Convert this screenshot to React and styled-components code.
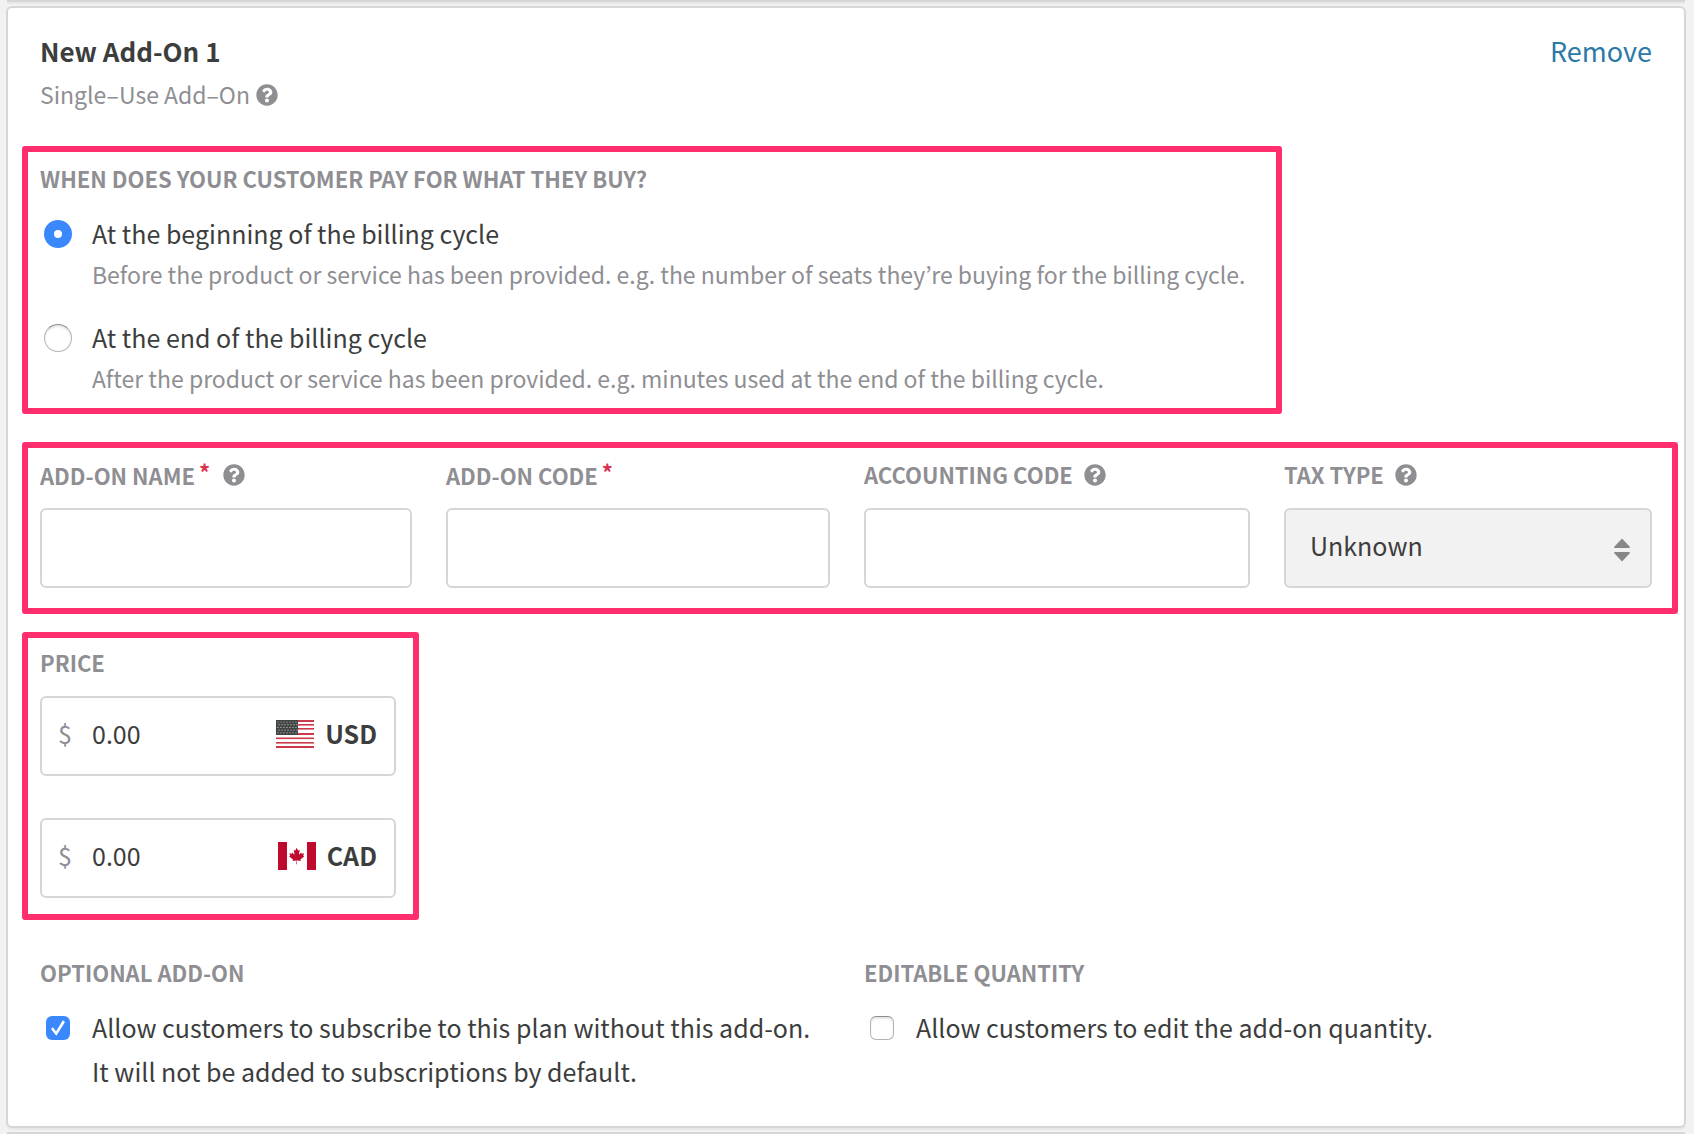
import React, { useState } from "react"
import styled, { createGlobalStyle } from "styled-components"
import { FaQuestionCircle } from "react-icons/fa"

const colors = {
  page: "#f2f2f2",
  border: "#d6d6d6",
  shadow: "#e8e8e8",
  text: "#3c3d3d",
  muted: "#8e8e93",
  link: "#2a79a8",
  accent: "#3b88fd",
  highlight: "#ff2f6e",
  required: "#dc3150",
}

const UsaFlag = () => (
  <Flag viewBox="0 0 38 28" aria-hidden="true">
    <rect width="38" height="28" fill="#fff" />
    {[0, 4, 8, 13, 17.5, 22, 26].map((y, i) => (
      <rect
        key={y}
        y={y}
        width="38"
        height={i === 3 || i === 0 || i === 6 ? 2 : 1.6}
        fill="#cb3a49"
      />
    ))}
    <rect width="22" height="15" fill="#414444" />
    {[2, 4.7, 7.4, 10.1, 12.8].map((y, row) =>
      [2, 5, 8, 11, 14, 17, 20].map(x => (
        <circle
          key={`${x}-${y}`}
          cx={row % 2 ? x + 1 : x}
          cy={y}
          r="0.6"
          fill="#c4c7c4"
        />
      ))
    )}
  </Flag>
)

const CanadaFlag = () => (
  <Flag viewBox="0 0 38 28" aria-hidden="true">
    <rect width="38" height="28" fill="#fff" />
    <rect width="9" height="28" fill="#bf0a30" />
    <rect x="29" width="9" height="28" fill="#bf0a30" />
    <path
      transform="translate(18.7 14) scale(0.0041)"
      fill="#bf0a30"
      d="m-90 2030 45-863a95 95 0 0 0-111-98l-859 151 116-320a65 65 0 0 0-20-73l-941-762 212-99a65 65 0 0 0 34-79l-186-572 542 115a65 65 0 0 0 73-38l105-247 423 454a65 65 0 0 0 111-57l-204-1052 327 189a65 65 0 0 0 91-27l332-652 332 652a65 65 0 0 0 91 27l327-189-204 1052a65 65 0 0 0 111 57l423-454 105 247a65 65 0 0 0 73 38l542-115-186 572a65 65 0 0 0 34 79l212 99-941 762a65 65 0 0 0-20 73l116 320-859-151a95 95 0 0 0-111 98l45 863z"
    />
  </Flag>
)

const timings = [
  {
    value: "beginning",
    title: "At the beginning of the billing cycle",
    text:
      "Before the product or service has been provided. e.g. the number of seats they’re buying for the billing cycle.",
  },
  {
    value: "end",
    title: "At the end of the billing cycle",
    text:
      "After the product or service has been provided. e.g. minutes used at the end of the billing cycle.",
  },
]

const currencies = [
  { code: "USD", flag: <UsaFlag /> },
  { code: "CAD", flag: <CanadaFlag /> },
]

const App = () => {
  const [timing, setTiming] = useState("beginning")

  return (
    <>
      <GlobalStyle />
      <Page>
        <CardEdge $side="bottom" />
        <Card>
          <Header>
            <div>
              <Title>New Add-On 1</Title>
              <Subtitle>
                Single–Use Add–On
                <HelpIcon />
              </Subtitle>
            </div>
            <RemoveLink href="#remove">Remove</RemoveLink>
          </Header>

          <TimingBox>
            <Legend>When does your customer pay for what they buy?</Legend>
            {timings.map(item => (
              <Option key={item.value}>
                <Radio
                  name="timing"
                  value={item.value}
                  checked={timing === item.value}
                  onChange={() => setTiming(item.value)}
                />
                <span>
                  <OptionTitle>{item.title}</OptionTitle>
                  <OptionText>{item.text}</OptionText>
                </span>
              </Option>
            ))}
          </TimingBox>

          <DetailsBox>
            <div>
              <LabelRow>
                <Label htmlFor="name">
                  Add-on name<Required>*</Required>
                </Label>
                <HelpIcon />
              </LabelRow>
              <Input id="name" />
            </div>
            <div>
              <LabelRow>
                <Label htmlFor="code">
                  Add-on code<Required>*</Required>
                </Label>
              </LabelRow>
              <Input id="code" />
            </div>
            <div>
              <LabelRow>
                <Label htmlFor="accounting">Accounting code</Label>
                <HelpIcon />
              </LabelRow>
              <Input id="accounting" />
            </div>
            <div>
              <LabelRow>
                <Label htmlFor="tax">Tax type</Label>
                <HelpIcon />
              </LabelRow>
              <SelectWrapper>
                <Select id="tax" defaultValue="Unknown">
                  <option>Unknown</option>
                  <option>Physical</option>
                  <option>Digital</option>
                </Select>
                <Arrows viewBox="0 0 16 24" aria-hidden="true">
                  <path d="M8 0.5 15.5 8.5Q16.5 10 15 10H1Q-.5 10 .5 8.5Z" />
                  <path d="M8 23.5 15.5 15.5Q16.5 14 15 14H1Q-.5 14 .5 15.5Z" />
                </Arrows>
              </SelectWrapper>
            </div>
          </DetailsBox>

          <PriceBox>
            <Legend>Price</Legend>
            <PriceList>
              {currencies.map(({ code, flag }) => (
                <PriceField key={code}>
                  <Dollar>$</Dollar>
                  <PriceInput defaultValue="0.00" aria-label={code} />
                  {flag}
                  <Currency>{code}</Currency>
                </PriceField>
              ))}
            </PriceList>
          </PriceBox>

          <Settings>
            <Group>
              <Legend>Optional add-on</Legend>
              <Option>
                <Checkbox defaultChecked />
                <OptionTitle>
                  Allow customers to subscribe to this plan without this add-on.
                  <br />
                  It will not be added to subscriptions by default.
                </OptionTitle>
              </Option>
            </Group>
            <Group>
              <Legend>Editable quantity</Legend>
              <Option>
                <Checkbox />
                <OptionTitle>
                  Allow customers to edit the add-on quantity.
                </OptionTitle>
              </Option>
            </Group>
          </Settings>
        </Card>
        <CardEdge $side="top" />
      </Page>
    </>
  )
}

export default App

const GlobalStyle = createGlobalStyle`
  * {
    box-sizing: border-box;
  }

  body {
    margin: 0;
    background: ${colors.page};
    color: ${colors.text};
    font-family: "Noto Sans CJK KR", "Noto Sans", sans-serif;
    font-size: 25px;
    line-height: 44px;
  }

  input,
  select {
    color: inherit;
    font: inherit;
  }
`

const Page = styled.main`
  display: grid;
  gap: 4px;
  padding: 0 8px 0 6px;
`

const Card = styled.section`
  padding: 23px 6px 33px 14px;
  background: #fff;
  border: 2px solid ${colors.border};
  border-radius: 6px;
  box-shadow: 0 2px 0 ${colors.shadow};
`

/* visible edge of the neighbouring card */
const CardEdge = styled.div`
  height: 2px;
  margin: 0 1px;
  background: ${colors.border};
  box-shadow: 0 ${props => (props.$side === "bottom" ? "2px" : "0")} 0
    ${colors.shadow};
`

const Header = styled.header`
  display: flex;
  justify-content: space-between;
  padding: 0 26px 32px 18px;
`

const Title = styled.h1`
  margin: 0;
  font-size: 26px;
  font-weight: 600;
  line-height: 40px;
`

const Subtitle = styled.p`
  display: flex;
  align-items: center;
  gap: 6px;
  margin: 0;
  padding-top: 3px;
  color: ${colors.muted};
  font-size: 23px;
  line-height: 40px;
`

const RemoveLink = styled.a`
  color: ${colors.link};
  font-size: 27px;
  line-height: 40px;
  text-decoration: none;
`

const HelpIcon = styled(FaQuestionCircle)`
  width: 22px;
  height: 22px;
  margin-top: 2px;
  color: ${colors.muted};
`

const Highlight = styled.fieldset`
  min-width: 0;
  margin: 0;
  border: 6px solid ${colors.highlight};
  border-radius: 3px;
`

const Legend = styled.legend`
  float: left;
  width: 100%;
  padding: 0;
  color: ${colors.muted};
  font-size: 22px;
  font-weight: 600;
  line-height: 28px;
  text-transform: uppercase;
`

const TimingBox = styled(Highlight)`
  width: fit-content;
  padding: 12px 30px 8px 12px;
`

const Option = styled.label`
  display: grid;
  grid-template-columns: 52px auto;
  clear: both;
  padding-top: 19px;
`

const OptionTitle = styled.span`
  display: block;
  line-height: 44px;
`

const OptionText = styled.span`
  display: block;
  padding-bottom: 3px;
  color: ${colors.muted};
  font-size: 23px;
  line-height: 38px;
`

const Radio = styled.input.attrs({ type: "radio" })`
  appearance: none;
  width: 28px;
  height: 28px;
  margin: 9px 4px;
  background: #fff;
  border: 1px solid #b4b4b4;
  border-top-color: #8f8f8f;
  border-radius: 50%;
  box-shadow: inset 0 2px 2px #e6e6e6;

  &:checked {
    border: 10px solid ${colors.accent};
    box-shadow: none;
  }
`

const Checkbox = styled.input.attrs({ type: "checkbox" })`
  appearance: none;
  width: 24px;
  height: 24px;
  margin: 11px 6px;
  background: #fff;
  border: 1px solid #b4b4b4;
  border-top-color: #8f8f8f;
  border-radius: 6px;
  box-shadow: inset 0 2px 2px #e6e6e6;

  &:checked {
    display: grid;
    place-items: center;
    background: ${colors.accent};
    border: 0;
    box-shadow: none;
  }

  &:checked::after {
    content: "";
    width: 14px;
    height: 16px;
    background: #fff;
    clip-path: polygon(0 56%, 14% 46%, 36% 72%, 84% 2%, 100% 12%, 38% 98%);
  }
`

const DetailsBox = styled(Highlight)`
  display: grid;
  grid-template-columns: 372fr 384fr 386fr 368fr;
  gap: 34px;
  margin-top: 28px;
  padding: 12px 20px 20px 12px;
`

const LabelRow = styled.div`
  display: flex;
  align-items: center;
  gap: 11px;
  height: 28px;
  margin-bottom: 20px;
`

const Label = styled.label`
  color: ${colors.muted};
  font-size: 22px;
  font-weight: 600;
  line-height: 28px;
  text-transform: uppercase;
`

const Required = styled.span`
  padding: 0 2px 0 4px;
  color: ${colors.required};
  line-height: 1;
  vertical-align: 4px;
`

const Input = styled.input`
  display: block;
  width: 100%;
  height: 80px;
  padding: 0 24px 6px;
  background: #fff;
  border: 2px solid ${colors.border};
  border-radius: 6px;
`

const SelectWrapper = styled.div`
  position: relative;
`

const Select = styled.select`
  appearance: none;
  display: block;
  width: 100%;
  height: 80px;
  padding: 0 24px 6px;
  background: ${colors.page};
  border: 2px solid ${colors.border};
  border-radius: 6px;
`

const Arrows = styled.svg`
  position: absolute;
  top: 30px;
  right: 22px;
  width: 16px;
  height: 24px;
  fill: #858788;
  pointer-events: none;
`

const PriceBox = styled(Highlight)`
  width: fit-content;
  margin-top: 18px;
  padding: 10px 17px 16px 12px;
`

const PriceList = styled.div`
  display: grid;
  grid-template-columns: 356px;
  gap: 42px;
  clear: both;
  padding-top: 20px;
`

const PriceField = styled.label`
  display: flex;
  align-items: center;
  height: 80px;
  padding: 0 17px 6px 16px;
  border: 2px solid ${colors.border};
  border-radius: 6px;
`

const Dollar = styled.span`
  width: 34px;
  color: ${colors.muted};
`

const PriceInput = styled.input`
  flex: 1;
  width: 0;
  padding: 0;
  background: none;
  border: 0;
`

const Flag = styled.svg`
  width: 38px;
  height: 28px;
  margin: 2px 11px 0 0;
`

const Currency = styled.span`
  font-weight: 600;
`

const Settings = styled.div`
  display: grid;
  grid-template-columns: 790fr 788fr;
  gap: 34px;
  margin-top: 38px;
  padding: 0 26px 0 18px;
`

const Group = styled.fieldset`
  min-width: 0;
  margin: 0;
  padding: 0;
  border: 0;
`
